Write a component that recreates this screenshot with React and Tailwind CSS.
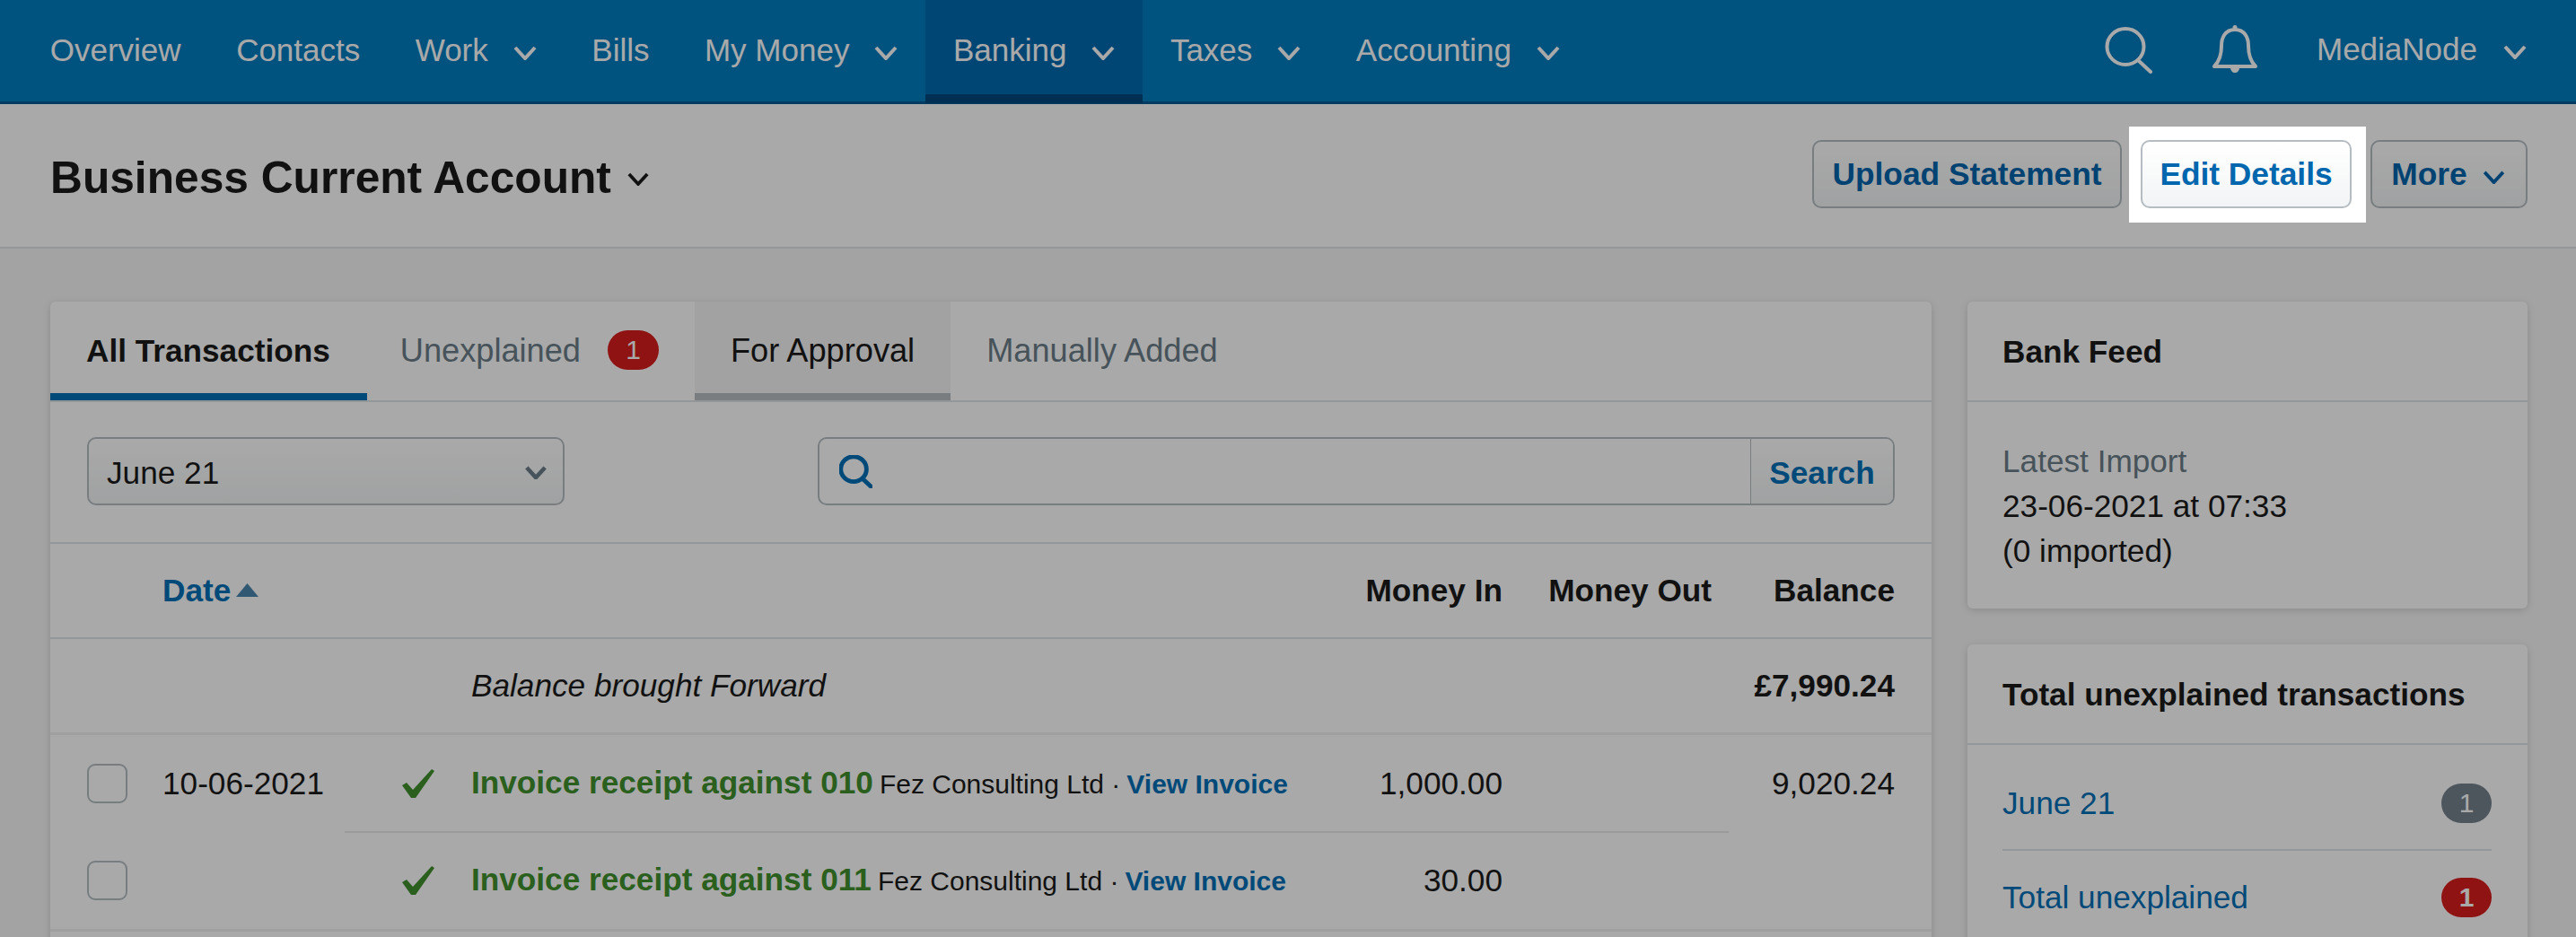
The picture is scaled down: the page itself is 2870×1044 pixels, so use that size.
const font = { fontFamily: '"Liberation Sans", Arial, sans-serif' }

function Chevron({ className, strokeWidth = 4 }) {
  return (
    <svg viewBox="0 0 26 16" className={className} fill="none" stroke="currentColor" strokeWidth={strokeWidth}>
      <path d="M2 2 L13 14 L24 2" />
    </svg>
  )
}

function SearchIcon({ className, strokeWidth = 4 }) {
  return (
    <svg viewBox="0 0 53 52" className={className} fill="none" stroke="currentColor" strokeWidth={strokeWidth} strokeLinecap="round">
      <ellipse cx="23" cy="22" rx="20.5" ry="20" />
      <path d="M37 37 L51 50" />
    </svg>
  )
}

function BellIcon({ className }) {
  return (
    <svg viewBox="0 0 50 56" className={className} fill="none" stroke="currentColor" strokeWidth="4" strokeLinejoin="round">
      <path d="M25 6 C14 6 10 15 10 24 C10 34 8 41 2 47 L48 47 C42 41 40 34 40 24 C40 15 36 6 25 6 Z" />
      <circle cx="25" cy="3.5" r="2.5" fill="currentColor" stroke="none" />
      <path d="M20 48 C20 56 30 56 30 48 Z" fill="currentColor" stroke="none" />
    </svg>
  )
}

function CheckIcon() {
  return (
    <svg viewBox="0 0 36 32" className="w-[36px] h-[32px] text-[#40902e]" fill="currentColor">
      <path d="M0 18 L5 15 L12 23 L33 0 L36 2 L15 32 L10 32 Z" />
    </svg>
  )
}

function NavItem({ label, menu, active }) {
  return (
    <div
      className={`flex items-center h-[116px] pt-[8px] px-[30.75px] border-b-[10px] ${
        active ? "bg-[#006aaf] border-[#00477f]" : "border-transparent"
      }`}
    >
      <span>{label}</span>
      {menu && <Chevron className="w-[26px] h-[16px] ml-[28px] mt-[6px]" />}
    </div>
  )
}

function Tab({ label, active, hover, className = "", children }) {
  return (
    <div
      className={`flex items-center h-[110px] pt-[8px] border-b-[8px] ${className} ${
        active
          ? "pl-[40px] pr-[41px] border-[#0070b8] font-bold text-[#1a1a1a]"
          : hover
            ? "px-[40px] text-[36.2px] border-[#b9bdc0] bg-[#f4f4f4] text-[#1a1a1a]"
            : "px-[40px] text-[36.2px] border-transparent text-[#6b7d89]"
      }`}
    >
      {label}
      {children}
    </div>
  )
}

function Row({ date, title, amount, balance }) {
  return (
    <div className="flex items-center h-[107px]">
      <div className="w-[125px] pl-[41px]">
        <div className="w-[45px] h-[44px] rounded-[9px] border-2 border-[#b5bdc2] bg-white" />
      </div>
      <div className="w-[267px]">{date}</div>
      <div className="w-[77px]">
        <CheckIcon />
      </div>
      <div className="flex-1 flex items-baseline whitespace-nowrap">
        <span className="font-bold text-[#40902e]">{title}</span>
        <span className="ml-[7px] text-[30px]">Fez Consulting Ltd ·</span>
        <span className="ml-[7px] text-[30px] font-bold text-[#0070b8]">View Invoice</span>
      </div>
      <div className="w-[180px] text-right">{amount}</div>
      <div className="w-[233px]" />
      <div className="w-[204px] text-right">{balance}</div>
      <div className="w-[41px]" />
    </div>
  )
}

function SideLink({ label, count, badge }) {
  return (
    <div className="flex items-center justify-between h-[54px]">
      <span className="text-[#0070b8]">{label}</span>
      <span className={`w-[56px] h-[44px] rounded-full flex items-center justify-center text-white text-[30px] ${badge}`}>{count}</span>
    </div>
  )
}

export default function App() {
  return (
    <div style={font} className="relative w-[2870px] h-[1044px] overflow-hidden bg-[#f6f6f6] text-[35.2px] leading-[50px] text-[#1a1a1a]">
      {/* top nav */}
      <div className="flex items-center h-[116px] pl-[25px] pr-[55px] text-[35px] text-white bg-[#007cc0] border-b-[3px] border-[#005a95]">
        <div className="flex">
          <NavItem label="Overview" />
          <NavItem label="Contacts" />
          <NavItem label="Work" menu />
          <NavItem label="Bills" />
          <NavItem label="My Money" menu />
          <NavItem label="Banking" menu active />
          <NavItem label="Taxes" menu />
          <NavItem label="Accounting" menu />
        </div>
        <div className="ml-auto flex items-center pb-[3px]">
          <SearchIcon className="w-[53px] h-[52px] mt-[1px]" />
          <BellIcon className="w-[50px] h-[56px] ml-[67px]" />
          <span className="ml-[66px]">MediaNode</span>
          <Chevron className="w-[26px] h-[16px] ml-[29px] mt-[6px]" />
        </div>
      </div>

      {/* account header */}
      <div className="flex items-center justify-between h-[161px] pl-[56px] pr-[54px] bg-white border-b-2 border-[#dfe3e6]">
        <div className="flex items-center mt-[4px] text-[49.7px] font-bold">
          Business Current Account
          <Chevron className="w-[24px] h-[15px] ml-[18px] mt-[4px]" />
        </div>
        <div className="flex items-center gap-[21px] mb-[3px] text-[35.3px] font-bold text-[#0066ad]">
          <button className="h-[76px] w-[345px] rounded-[10px] border-2 border-[#b5bdc2] bg-linear-to-b from-white to-[#f2f4f5]">Upload Statement</button>
          <div className="relative z-10">
            <div className="absolute -left-[13px] -right-[16px] -top-[15px] -bottom-[16px] bg-white shadow-[0_0_0_3000px_rgba(0,0,0,0.337)]" />
            <button className="relative block h-[76px] w-[235px] rounded-[10px] border-2 border-[#b5bdc2] bg-linear-to-b from-white to-[#f2f4f5]">Edit Details</button>
          </div>
          <button className="flex items-center justify-center h-[76px] w-[175px] pr-[2px] rounded-[10px] border-2 border-[#b5bdc2] bg-linear-to-b from-white to-[#f2f4f5]">
            More
            <Chevron className="w-[25px] h-[15px] ml-[17px] mt-[6px]" />
          </button>
        </div>
      </div>

      <div className="flex items-start gap-[40px] pt-[59px] pl-[56px] pr-[54px]">
        {/* transactions */}
        <div className="w-[2096px] bg-white rounded-[6px] shadow-[0_2px_8px_rgba(0,0,0,0.15)]">
          <div className="flex h-[112px] border-b-2 border-[#dee4e8]">
            <Tab label="All Transactions" active />
            <Tab label="Unexplained" className="-ml-[3px]">
              <span className="ml-[30px] mb-[2px] w-[57px] h-[44px] rounded-full bg-[#d81d1d] text-white text-[30px] flex items-center justify-center">1</span>
            </Tab>
            <Tab label="For Approval" hover />
            <Tab label="Manually Added" />
          </div>

          <div className="flex items-center justify-between h-[158px] pb-[2px] px-[41px] border-b-2 border-[#dee4e8]">
            <div className="flex items-center justify-between w-[532px] h-[76px] pl-[20px] pr-[18px] pt-[4px] rounded-[10px] border-2 border-[#b5bdc2] bg-linear-to-b from-white to-[#f2f4f5]">
              June 21
              <Chevron className="w-[24px] h-[15px] mb-[2px] text-[#6b7d89]" strokeWidth={5} />
            </div>
            <div className="flex items-stretch w-[1200px] h-[76px] rounded-[10px] border-2 border-[#b5bdc2]">
              <div className="flex-1 flex items-center pl-[22px]">
                <SearchIcon className="w-[37px] h-[37px] text-[#0070b8]" strokeWidth={7} />
              </div>
              <div className="w-[159px] pt-[4px] flex items-center justify-center border-l border-[#b5bdc2] font-bold text-[#0070b8] rounded-r-[8px] bg-linear-to-b from-white to-[#f2f4f5]">Search</div>
            </div>
          </div>

          <div className="flex items-center h-[106px] font-bold border-b-2 border-[#dee4e8]">
            <div className="w-[125px]" />
            <div className="flex items-center flex-1 text-[#0070b8]">
              Date
              <svg viewBox="0 0 25 15" className="w-[25px] h-[15px] ml-[6px] mb-[2px] text-[#4a86ad]" fill="currentColor">
                <path d="M12.5 0 L25 15 L0 15 Z" />
              </svg>
            </div>
            <div className="w-[180px] text-right">Money In</div>
            <div className="w-[233px] text-right">Money Out</div>
            <div className="w-[204px] text-right">Balance</div>
            <div className="w-[41px]" />
          </div>

          <div className="flex items-center h-[107px] border-b-[3px] border-[#f0f0f0]">
            <div className="w-[469px]" />
            <div className="flex-1 italic">Balance brought Forward</div>
            <div className="w-[204px] text-right font-bold">£7,990.24</div>
            <div className="w-[41px]" />
          </div>

          <Row date="10-06-2021" title="Invoice receipt against 010" amount="1,000.00" balance="9,020.24" />
          <div className="ml-[328px] w-[1542px] h-[2px] bg-[#e8e8e8]" />
          <div className="-mt-[1px] pb-[1px]">
            <Row title="Invoice receipt against 011" amount="30.00" />
          </div>
          <div className="h-[3px] mb-[60px] bg-[#f0f0f0]" />
        </div>

        {/* side panels */}
        <div className="flex-1 flex flex-col gap-[40px]">
          <div className="bg-white rounded-[6px] shadow-[0_2px_8px_rgba(0,0,0,0.15)]">
            <div className="flex items-center h-[112px] pl-[39px] pr-[40px] pt-[2px] font-bold border-b-2 border-[#dee4e8]">Bank Feed</div>
            <div className="pl-[39px] pr-[40px] pt-[41px] pb-[39px]">
              <div className="text-[#6b7d89]">Latest Import</div>
              <div>23-06-2021 at 07:33</div>
              <div>(0 imported)</div>
            </div>
          </div>
          <div className="bg-white rounded-[6px] shadow-[0_2px_8px_rgba(0,0,0,0.15)]">
            <div className="flex items-center h-[112px] pl-[39px] pr-[40px] pt-[2px] font-bold border-b-2 border-[#dee4e8]">Total unexplained transactions</div>
            <div className="pl-[39px] pr-[40px] pt-[38px] pb-[40px]">
              <SideLink label="June 21" count="1" badge="bg-[#75838d]" />
              <div className="h-[2px] bg-[#dee4e8] mt-[24px] mb-[25px]" />
              <SideLink label="Total unexplained" count="1" badge="bg-[#d81d1d] font-bold" />
            </div>
          </div>
        </div>
      </div>
    </div>
  )
}
